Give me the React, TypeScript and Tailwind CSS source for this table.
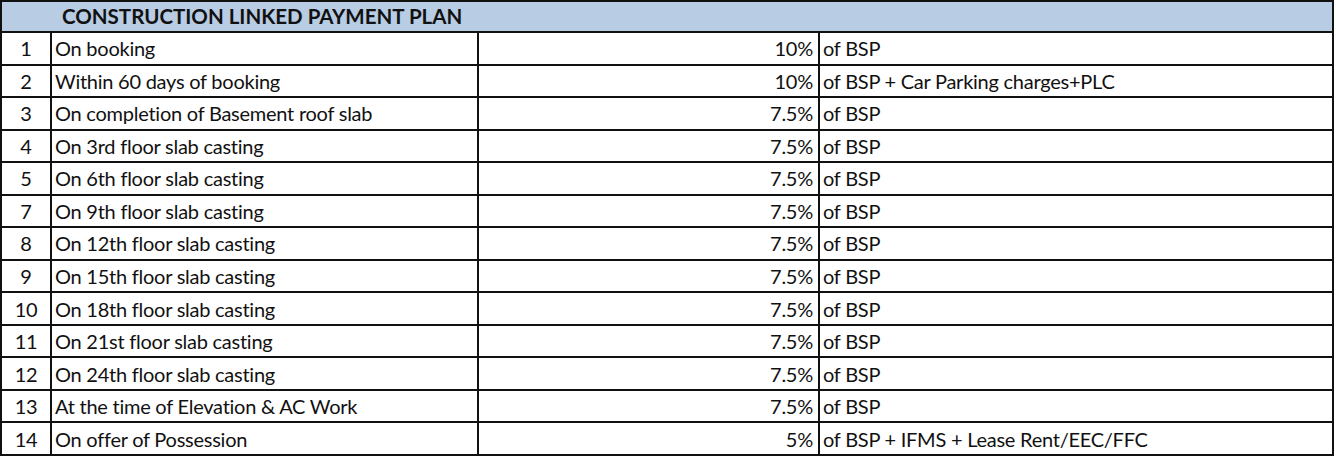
import React from "react";

const rows: [string, string, string, string][] = [
  ["1", "On booking", "10%", "of BSP"],
  ["2", "Within 60 days of booking", "10%", "of BSP + Car Parking charges+PLC"],
  ["3", "On completion of Basement roof slab", "7.5%", "of BSP"],
  ["4", "On 3rd floor slab casting", "7.5%", "of BSP"],
  ["5", "On 6th floor slab casting", "7.5%", "of BSP"],
  ["7", "On 9th floor slab casting", "7.5%", "of BSP"],
  ["8", "On 12th floor slab casting", "7.5%", "of BSP"],
  ["9", "On 15th floor slab casting", "7.5%", "of BSP"],
  ["10", "On 18th floor slab casting", "7.5%", "of BSP"],
  ["11", "On 21st floor slab casting", "7.5%", "of BSP"],
  ["12", "On 24th floor slab casting", "7.5%", "of BSP"],
  ["13", "At the time of Elevation & AC Work", "7.5%", "of BSP"],
  ["14", "On offer of Possession", "5%", "of BSP + IFMS + Lease Rent/EEC/FFC"],
];

export default function App() {
  return (
    <div className="w-[1336px] h-[456px] bg-white overflow-hidden">
      <div
        className="w-[1334px] h-[456px] bg-[#111] p-[2px] grid gap-[2px] grid-cols-[48px_425px_339px_512px] grid-rows-[29px_repeat(13,1fr)] text-[20px] text-[#111] leading-none tracking-[-0.25px]"
        style={{ fontFamily: "Lato, 'Liberation Sans', sans-serif" }}
      >
        <div className="col-span-4 bg-[#b8cce4] flex items-center pl-[60px] font-bold text-[20.5px] tracking-normal">
          CONSTRUCTION LINKED PAYMENT PLAN
        </div>
        {rows.map((r) => (
          <React.Fragment key={r[0]}>
            <div className="bg-white flex items-center justify-center">{r[0]}</div>
            <div className="bg-white flex items-center pl-[3px]">{r[1]}</div>
            <div className="bg-white flex items-center justify-end pr-[5px]">{r[2]}</div>
            <div className="bg-white flex items-center pl-[3px]">{r[3]}</div>
          </React.Fragment>
        ))}
      </div>
    </div>
  );
}
